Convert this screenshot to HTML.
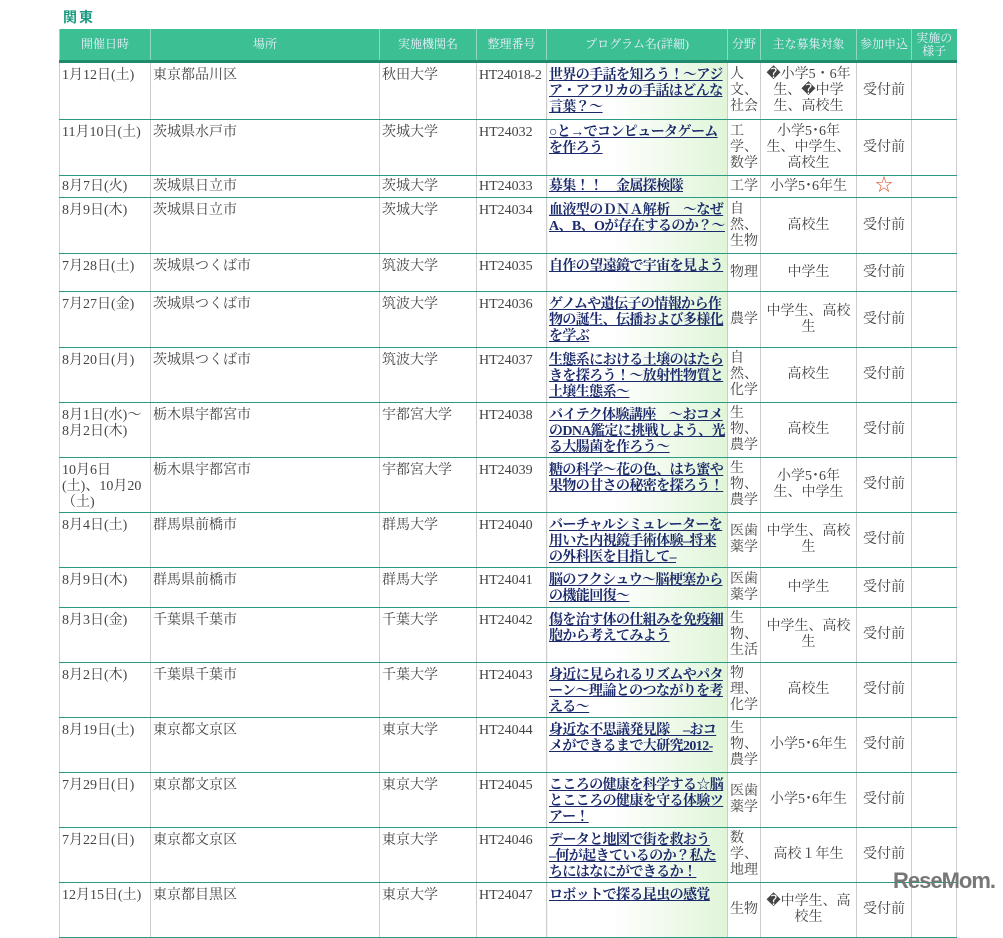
<!DOCTYPE html>
<html><head><meta charset="utf-8"><style>
body{margin:0;background:#fff;font-family:"Liberation Serif","Noto Serif CJK JP","Noto Serif CJK SC",serif;}
h2{position:absolute;left:63px;top:7px;margin:0;font:bold 14px "Liberation Sans","Noto Sans CJK JP",sans-serif;color:#1a9a80;letter-spacing:2px}
table{position:absolute;left:59px;top:29px;border-collapse:collapse;table-layout:fixed;width:897px;font-size:14px;line-height:16px;color:#444}
th{background:#3cc093;color:#eef;font-weight:normal;font-size:12px;line-height:13px;height:31px;border-left:1px solid #8fd9c0;border-bottom:3px solid #1f8a6e;padding:0}
td{border-top:1px solid #2a9a84;border-bottom:1px solid #2a9a84;border-left:1px solid #ccc;border-right:1px solid #ccc;vertical-align:top;padding:5px 2px 0 2px;overflow:hidden}
td.n{white-space:nowrap;letter-spacing:-0.3px}
td.p{background:linear-gradient(to right,#fff 35%,#e0f5d8);padding:5px 1px 0 2px}
td.p a{color:#1b2a6b;font-weight:bold;text-decoration:underline;letter-spacing:-0.6px}
td.f{vertical-align:middle;padding:0 2px}
td.c{text-align:center;vertical-align:middle;padding:0 4px}
.star{color:#e06040;font-size:18px}
.logo{position:absolute;left:893px;top:868px;font:bold 22px "Liberation Sans",sans-serif;color:#777;letter-spacing:-1px}
</style></head><body>
<h2>関東</h2>
<table>
<colgroup><col style="width:91px"><col style="width:229px"><col style="width:97px"><col style="width:70px"><col style="width:181px"><col style="width:33px"><col style="width:96px"><col style="width:55px"><col style="width:45px"></colgroup>
<tr><th>開催日時</th><th>場所</th><th>実施機関名</th><th>整理番号</th><th>プログラム名(詳細)</th><th>分野</th><th>主な募集対象</th><th>参加申込</th><th>実施の<br>様子</th></tr>
<tr style="height:58px"><td>1月12日(土)</td><td>東京都品川区</td><td>秋田大学</td><td class="n">HT24018-2</td><td class="p"><a>世界の手話を知ろう！～アジア・アフリカの手話はどんな言葉？～</a></td><td class="f">人文、社会</td><td class="c">�小学5・6年生、�中学生、高校生</td><td class="c">受付前</td><td></td></tr>
<tr style="height:56px"><td>11月10日(土)</td><td>茨城県水戸市</td><td>茨城大学</td><td>HT24032</td><td class="p"><a>○と→でコンピュータゲームを作ろう</a></td><td class="f">工学、数学</td><td class="c">小学5･6年生、中学生、高校生</td><td class="c">受付前</td><td></td></tr>
<tr style="height:22px"><td style="padding-top:3px">8月7日(火)</td><td style="padding-top:3px">茨城県日立市</td><td style="padding-top:3px">茨城大学</td><td style="padding-top:3px">HT24033</td><td class="p" style="padding-top:3px"><a>募集！！　金属探検隊</a></td><td class="f">工学</td><td class="c">小学5･6年生</td><td class="c"><span class="star">☆</span></td><td></td></tr>
<tr style="height:56px"><td>8月9日(木)</td><td>茨城県日立市</td><td>茨城大学</td><td>HT24034</td><td class="p"><a>血液型のＤＮＡ解析　～なぜA、B、Oが存在するのか？～</a></td><td class="f">自然、生物</td><td class="c">高校生</td><td class="c">受付前</td><td></td></tr>
<tr style="height:38px"><td>7月28日(土)</td><td>茨城県つくば市</td><td>筑波大学</td><td>HT24035</td><td class="p"><a>自作の望遠鏡で宇宙を見よう</a></td><td class="f">物理</td><td class="c">中学生</td><td class="c">受付前</td><td></td></tr>
<tr style="height:56px"><td>7月27日(金)</td><td>茨城県つくば市</td><td>筑波大学</td><td>HT24036</td><td class="p"><a>ゲノムや遺伝子の情報から作物の誕生、伝播および多様化を学ぶ</a></td><td class="f">農学</td><td class="c">中学生、高校生</td><td class="c">受付前</td><td></td></tr>
<tr style="height:55px"><td>8月20日(月)</td><td>茨城県つくば市</td><td>筑波大学</td><td>HT24037</td><td class="p"><a>生態系における土壌のはたらきを探ろう！～放射性物質と土壌生態系～</a></td><td class="f">自然、化学</td><td class="c">高校生</td><td class="c">受付前</td><td></td></tr>
<tr style="height:55px"><td>8月1日(水)～<br>8月2日(木)</td><td>栃木県宇都宮市</td><td>宇都宮大学</td><td>HT24038</td><td class="p"><a>バイテク体験講座　～おコメのDNA鑑定に挑戦しよう、光る大腸菌を作ろう～</a></td><td class="f">生物、農学</td><td class="c">高校生</td><td class="c">受付前</td><td></td></tr>
<tr style="height:55px"><td>10月6日<br>(土)、10月20<br>（土)</td><td>栃木県宇都宮市</td><td>宇都宮大学</td><td>HT24039</td><td class="p"><a>糖の科学～花の色、はち蜜や果物の甘さの秘密を探ろう！</a></td><td class="f">生物、農学</td><td class="c">小学5･6年生、中学生</td><td class="c">受付前</td><td></td></tr>
<tr style="height:55px"><td>8月4日(土)</td><td>群馬県前橋市</td><td>群馬大学</td><td>HT24040</td><td class="p"><a>バーチャルシミュレーターを用いた内視鏡手術体験–将来の外科医を目指して–</a></td><td class="f">医歯薬学</td><td class="c">中学生、高校生</td><td class="c">受付前</td><td></td></tr>
<tr style="height:40px"><td>8月9日(木)</td><td>群馬県前橋市</td><td>群馬大学</td><td>HT24041</td><td class="p"><a>脳のフクシュウ～脳梗塞からの機能回復～</a></td><td class="f">医歯薬学</td><td class="c">中学生</td><td class="c">受付前</td><td></td></tr>
<tr style="height:55px"><td>8月3日(金)</td><td>千葉県千葉市</td><td>千葉大学</td><td>HT24042</td><td class="p"><a>傷を治す体の仕組みを免疫細胞から考えてみよう</a></td><td class="f">生物、生活</td><td class="c">中学生、高校生</td><td class="c">受付前</td><td></td></tr>
<tr style="height:55px"><td>8月2日(木)</td><td>千葉県千葉市</td><td>千葉大学</td><td>HT24043</td><td class="p"><a>身近に見られるリズムやパターン～理論とのつながりを考える～</a></td><td class="f">物理、化学</td><td class="c">高校生</td><td class="c">受付前</td><td></td></tr>
<tr style="height:55px"><td>8月19日(土)</td><td>東京都文京区</td><td>東京大学</td><td>HT24044</td><td class="p"><a>身近な不思議発見隊　–おコメができるまで大研究2012-</a></td><td class="f">生物、農学</td><td class="c">小学5･6年生</td><td class="c">受付前</td><td></td></tr>
<tr style="height:55px"><td>7月29日(日)</td><td>東京都文京区</td><td>東京大学</td><td>HT24045</td><td class="p"><a>こころの健康を科学する☆脳とこころの健康を守る体験ツアー！</a></td><td class="f">医歯薬学</td><td class="c">小学5･6年生</td><td class="c">受付前</td><td></td></tr>
<tr style="height:55px"><td>7月22日(日)</td><td>東京都文京区</td><td>東京大学</td><td>HT24046</td><td class="p"><a>データと地図で街を救おう<br>–何が起きているのか？私たちにはなにができるか！</a></td><td class="f">数学、地理</td><td class="c">高校１年生</td><td class="c">受付前</td><td></td></tr>
<tr style="height:55px"><td>12月15日(土)</td><td>東京都目黒区</td><td>東京大学</td><td>HT24047</td><td class="p"><a>ロボットで探る昆虫の感覚</a></td><td class="f">生物</td><td class="c">�中学生、高校生</td><td class="c">受付前</td><td></td></tr>
</table>
<div class="logo">ReseMom.</div>
</body></html>
